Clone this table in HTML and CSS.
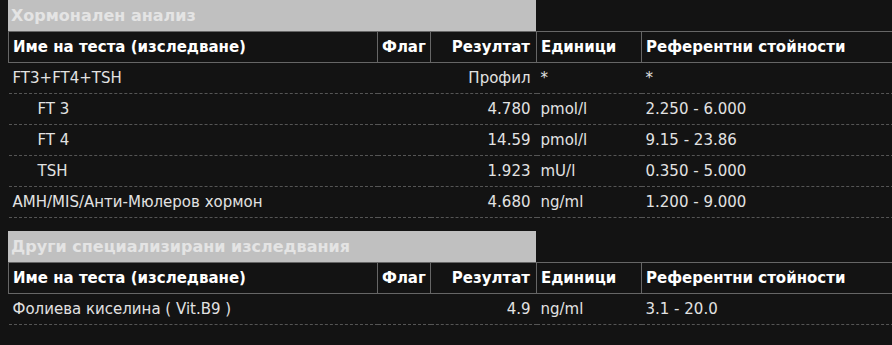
FILE: index.html
```html
<!DOCTYPE html>
<html lang="bg">
<head>
<meta charset="utf-8">
<title>Резултати</title>
<link rel="stylesheet" href="styles.css">
</head>
<body>
<div class="page">
  <section class="group">
    <div class="group-title">Хормонален анализ</div>
    <table class="results">
      <colgroup>
        <col class="c-name"><col class="c-flag"><col class="c-res"><col class="c-unit"><col class="c-ref">
      </colgroup>
      <thead>
        <tr>
          <th>Име на теста (изследване)</th>
          <th>Флаг</th>
          <th class="num">Резултат</th>
          <th>Единици</th>
          <th>Референтни стойности</th>
        </tr>
      </thead>
      <tbody>
        <tr><td>FT3+FT4+TSH</td><td></td><td class="num">Профил</td><td>*</td><td>*</td></tr>
        <tr><td class="sub">FT 3</td><td></td><td class="num">4.780</td><td>pmol/l</td><td>2.250 - 6.000</td></tr>
        <tr><td class="sub">FT 4</td><td></td><td class="num">14.59</td><td>pmol/l</td><td>9.15 - 23.86</td></tr>
        <tr><td class="sub">TSH</td><td></td><td class="num">1.923</td><td>mU/l</td><td>0.350 - 5.000</td></tr>
        <tr><td>АМН/MIS/Анти-Мюлеров хормон</td><td></td><td class="num">4.680</td><td>ng/ml</td><td>1.200 - 9.000</td></tr>
      </tbody>
    </table>
  </section>
  <section class="group">
    <div class="group-title">Други специализирани изследвания</div>
    <table class="results">
      <colgroup>
        <col class="c-name"><col class="c-flag"><col class="c-res"><col class="c-unit"><col class="c-ref">
      </colgroup>
      <thead>
        <tr>
          <th>Име на теста (изследване)</th>
          <th>Флаг</th>
          <th class="num">Резултат</th>
          <th>Единици</th>
          <th>Референтни стойности</th>
        </tr>
      </thead>
      <tbody>
        <tr><td>Фолиева киселина ( Vit.B9 )</td><td></td><td class="num">4.9</td><td>ng/ml</td><td>3.1 - 20.0</td></tr>
      </tbody>
    </table>
  </section>
</div>
</body>
</html>
```
FILE: styles.css
```css
html, body {
  margin: 0;
  padding: 0;
  background: #131313;
  overflow: hidden;
}
body {
  font-family: "DejaVu Sans", Verdana, sans-serif;
  font-size: 15px;
  color: #e2e2e2;
}
.page {
  padding: 0 0 0 8px;
  width: 900px;
}
.group {
  margin-bottom: 13px;
}
.group-title {
  width: 528px;
  height: 31px;
  line-height: 31px;
  background: #c0c0c0;
  color: #e4e4e4;
  font-weight: bold;
  font-size: 16px;
  padding-left: 3px;
  box-sizing: border-box;
}
.results {
  border-collapse: collapse;
  table-layout: fixed;
  width: 900px;
}
.c-name { width: 369px; }
.c-flag { width: 53px; }
.c-res { width: 106px; }
.c-unit { width: 105px; }
.c-ref { width: 267px; }
.results th {
  border: 1px solid #666;
  height: 30px;
  padding: 0 4px;
  text-align: left;
  color: #fff;
  font-weight: bold;
  white-space: nowrap;
}
.results td {
  height: 30px;
  padding: 0 4px;
  border-bottom: 1px dashed #555;
  white-space: nowrap;
}
.results .num {
  text-align: right;
  padding-right: 6px;
}
.results td.sub {
  padding-left: 29px;
}
```
